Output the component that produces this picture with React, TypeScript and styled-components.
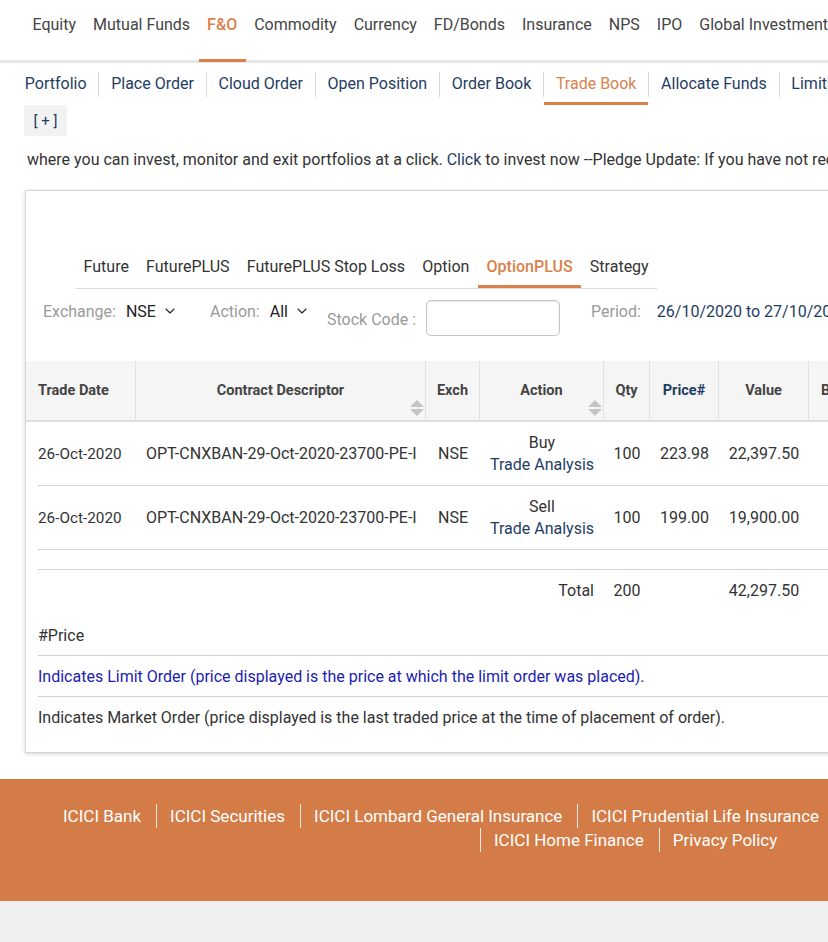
import React from 'react';
import styled, { createGlobalStyle } from 'styled-components';
import { ChevronDown } from 'lucide-react';

const GlobalStyle = createGlobalStyle`
  html, body {
    margin: 0;
    padding: 0;
    background: #f0f0f0;
    overflow: hidden;
  }
  body {
    font-family: Roboto, 'Noto Sans', Arial, sans-serif;
    color: #333;
  }
`;

const ORANGE = '#d9814c';
const NAVY = '#1f3d63';

const Page = styled.div`
  width: 1180px;
  background: #ffffff;
`;

const TopNav = styled.nav`
  display: flex;
  height: 60px;
  padding-left: 24px;
  border-bottom: 3px solid #e6e6e6;
`;

const TopItem = styled.a<{ $active?: boolean }>`
  display: flex;
  align-items: center;
  padding: 0 8.5px 10px;
  font-size: 16px;
  color: ${(p) => (p.$active ? ORANGE : '#444')};
  font-weight: ${(p) => (p.$active ? 500 : 400)};
  border-bottom: 3px solid ${(p) => (p.$active ? ORANGE : 'transparent')};
  margin-bottom: -2px;
  white-space: nowrap;
`;

const SubNav = styled.div`
  display: flex;
  align-items: center;
  padding-left: 13px;
  margin-top: 1px;
`;

const SubItem = styled.a<{ $active?: boolean }>`
  display: flex;
  align-items: center;
  height: 38px;
  padding: 0 11.8px;
  font-size: 16px;
  color: ${(p) => (p.$active ? ORANGE : NAVY)};
  border-bottom: 3px solid ${(p) => (p.$active ? ORANGE : 'transparent')};
  white-space: nowrap;
`;

const SubSep = styled.span`
  width: 1px;
  height: 25px;
  background: #d8d8d8;
`;

const ExpandBox = styled.div`
  width: 43px;
  height: 31px;
  margin-left: 24px;
  background: #f2f2f2;
  color: ${NAVY};
  font-size: 15px;
  display: flex;
  align-items: center;
  justify-content: center;
  white-space: pre;
`;

const Ticker = styled.div`
  margin: 14px 0 0 27px;
  line-height: 20px;
  font-size: 16px;
  color: #333;
  white-space: nowrap;
`;

const TickerLink = styled.span`
  color: ${NAVY};
`;

const Card = styled.section`
  margin: 20px 0 0 25px;
  border: 1px solid #d6d6d6;
  box-shadow: 0 1px 4px rgba(0, 0, 0, 0.18);
  background: #fff;
  padding-bottom: 15px;
`;

const TabList = styled.div`
  display: inline-flex;
  margin: 56px 0 0 49px;
  border-bottom: 1px solid #dcdcdc;
`;

const Tab = styled.a<{ $active?: boolean }>`
  display: flex;
  align-items: center;
  height: 38px;
  padding: 0 8.6px;
  font-size: 16px;
  color: ${(p) => (p.$active ? ORANGE : '#333')};
  font-weight: ${(p) => (p.$active ? 500 : 400)};
  border-bottom: 3px solid ${(p) => (p.$active ? ORANGE : 'transparent')};
  white-space: nowrap;
`;

const FilterRow = styled.div`
  display: flex;
  align-items: flex-start;
  padding: 11px 0 0 17px;
  height: 36px;
`;

const FilterGroup = styled.div<{ $gap: number; $center?: boolean }>`
  display: flex;
  align-items: center;
  height: ${(p) => (p.$center ? '36px' : '22px')};
  margin-right: ${(p) => p.$gap}px;
  white-space: nowrap;
`;

const FilterLabel = styled.span<{ $offset?: number }>`
  font-size: 16px;
  color: #9a9a9a;
  margin-right: 10px;
  padding-top: ${(p) => p.$offset ?? 0}px;
`;

const FilterValue = styled.span<{ $navy?: boolean }>`
  font-size: 16px;
  color: ${(p) => (p.$navy ? NAVY : '#222')};
  margin-left: ${(p) => (p.$navy ? '6px' : '0')};
  display: flex;
  align-items: center;
  gap: 6px;
`;

const StockInput = styled.input`
  width: 134px;
  height: 36px;
  box-sizing: border-box;
  border: 1px solid #c4c4c4;
  border-radius: 5px;
  box-shadow: inset 0 1px 2px rgba(0, 0, 0, 0.08);
`;

const COLS = '110px 290px 54px 124px 46px 69px 90px 92px 110px 110px';

const Table = styled.div`
  margin-top: 25px;
`;

const HeaderRow = styled.div`
  display: grid;
  grid-template-columns: ${COLS};
  height: 59px;
  background: #f5f5f5;
  border-bottom: 2px solid #dedede;
`;

const HeadCell = styled.div<{ $left?: boolean; $navy?: boolean }>`
  position: relative;
  display: flex;
  align-items: center;
  justify-content: ${(p) => (p.$left ? 'flex-start' : 'center')};
  padding-left: ${(p) => (p.$left ? '12px' : '0')};
  border-right: 1px solid #e0e0e0;
  font-size: 14.5px;
  font-weight: 700;
  color: ${(p) => (p.$navy ? NAVY : '#444')};
  white-space: nowrap;
`;

const SortMark = styled.svg`
  position: absolute;
  right: 0;
  bottom: 2px;
`;

const BodyRow = styled.div`
  display: grid;
  grid-template-columns: 98px 290px 54px 124px 46px 69px 90px 92px 110px 110px;
  height: 64px;
  margin-left: 12px;
  padding-top: 1px;
  box-sizing: border-box;
  border-bottom: 1px solid #d2d2d2;
`;

const Cell = styled.div<{ $align?: 'left' | 'center' | 'right' }>`
  display: flex;
  flex-direction: column;
  justify-content: center;
  align-items: ${(p) =>
    p.$align === 'left' ? 'flex-start' : p.$align === 'right' ? 'flex-end' : 'center'};
  padding: ${(p) => (p.$align === 'left' ? '0 0 0 10px' : p.$align === 'right' ? '0 10px 0 0' : '0')};
  font-size: 16px;
  color: #333;
  white-space: nowrap;
  line-height: 22px;
`;

const FirstCell = styled(Cell)`
  padding-left: 0;
  font-size: 15.3px;
`;

const ActionLink = styled.span`
  color: ${NAVY};
`;

const Spacer = styled.div`
  height: 19px;
  margin-left: 12px;
  border-bottom: 1px solid #d2d2d2;
`;

const TotalRow = styled.div`
  display: grid;
  grid-template-columns: ${COLS};
  height: 41px;
`;

const Notes = styled.div`
  margin: 4px 0 0 12px;
`;

const Note = styled.div<{ $blue?: boolean; $line?: boolean }>`
  height: 40px;
  display: flex;
  align-items: center;
  font-size: 16px;
  color: ${(p) => (p.$blue ? '#1d1db0' : '#333')};
  border-bottom: ${(p) => (p.$line ? '1px solid #d2d2d2' : 'none')};
  white-space: nowrap;
`;

const Footer = styled.footer`
  margin-top: 26px;
  background: #d37c47;
  height: 122px;
  padding-top: 25px;
  box-sizing: border-box;
`;

const FooterRow = styled.div<{ $indent: number }>`
  display: flex;
  padding-left: ${(p) => p.$indent}px;
`;

const FooterLink = styled.a<{ $first?: boolean }>`
  color: #fff;
  font-size: 17px;
  line-height: 24px;
  padding: 0 15px 0 13px;
  border-left: 1px solid ${(p) => (p.$first ? 'transparent' : 'rgba(255,255,255,0.85)')};
  white-space: nowrap;
`;

const Sort = () => (
  <SortMark width="16" height="20" viewBox="0 0 16 20">
    <path d="M8 2 L15 9 L1 9 Z" fill="#c4c4c4" />
    <path d="M1 11 L15 11 L8 18 Z" fill="#c4c4c4" />
  </SortMark>
);

const topItems = ['Equity', 'Mutual Funds', 'F&O', 'Commodity', 'Currency', 'FD/Bonds', 'Insurance', 'NPS', 'IPO', 'Global Investment'];
const subItems = ['Portfolio', 'Place Order', 'Cloud Order', 'Open Position', 'Order Book', 'Trade Book', 'Allocate Funds', 'Limits'];
const tabs = ['Future', 'FuturePLUS', 'FuturePLUS Stop Loss', 'Option', 'OptionPLUS', 'Strategy'];

const trades = [
  { date: '26-Oct-2020', contract: 'OPT-CNXBAN-29-Oct-2020-23700-PE-I', exch: 'NSE', action: 'Buy', qty: '100', price: '223.98', value: '22,397.50' },
  { date: '26-Oct-2020', contract: 'OPT-CNXBAN-29-Oct-2020-23700-PE-I', exch: 'NSE', action: 'Sell', qty: '100', price: '199.00', value: '19,900.00' },
];

export default function App() {
  return (
    <>
      <GlobalStyle />
      <Page>
        <TopNav>
          {topItems.map((t) => (
            <TopItem key={t} $active={t === 'F&O'}>{t}</TopItem>
          ))}
        </TopNav>

        <SubNav>
          {subItems.map((s, i) => (
            <React.Fragment key={s}>
              {i > 0 && <SubSep />}
              <SubItem $active={s === 'Trade Book'}>{s}</SubItem>
            </React.Fragment>
          ))}
        </SubNav>

        <ExpandBox>[ + ]</ExpandBox>

        <Ticker>
          where you can invest, monitor and exit portfolios at a click. <TickerLink>Click</TickerLink> to invest now --Pledge Update: If you have not received your pledge confirmation
        </Ticker>

        <Card>
          <TabList>
            {tabs.map((t) => (
              <Tab key={t} $active={t === 'OptionPLUS'}>{t}</Tab>
            ))}
          </TabList>

          <FilterRow>
            <FilterGroup $gap={32}>
              <FilterLabel>Exchange:</FilterLabel>
              <FilterValue>NSE <ChevronDown size={16} strokeWidth={1.6} /></FilterValue>
            </FilterGroup>
            <FilterGroup $gap={17}>
              <FilterLabel>Action:</FilterLabel>
              <FilterValue>All <ChevronDown size={16} strokeWidth={1.6} /></FilterValue>
            </FilterGroup>
            <FilterGroup $gap={31} $center>
              <FilterLabel $offset={2}>Stock Code :</FilterLabel>
              <StockInput />
            </FilterGroup>
            <FilterGroup $gap={0}>
              <FilterLabel>Period:</FilterLabel>
              <FilterValue $navy>26/10/2020 to 27/10/2020</FilterValue>
            </FilterGroup>
          </FilterRow>

          <Table>
            <HeaderRow>
              <HeadCell $left>Trade Date</HeadCell>
              <HeadCell>Contract Descriptor<Sort /></HeadCell>
              <HeadCell>Exch</HeadCell>
              <HeadCell>Action<Sort /></HeadCell>
              <HeadCell>Qty</HeadCell>
              <HeadCell $navy>Price#</HeadCell>
              <HeadCell>Value</HeadCell>
              <HeadCell>Brokerage</HeadCell>
              <HeadCell>Service Tax</HeadCell>
              <HeadCell>Stamp Duty</HeadCell>
            </HeaderRow>

            {trades.map((t, i) => (
              <BodyRow key={i}>
                <FirstCell $align="left">{t.date}</FirstCell>
                <Cell $align="left">{t.contract}</Cell>
                <Cell>{t.exch}</Cell>
                <Cell>
                  <span>{t.action}</span>
                  <ActionLink>Trade Analysis</ActionLink>
                </Cell>
                <Cell>{t.qty}</Cell>
                <Cell>{t.price}</Cell>
                <Cell>{t.value}</Cell>
                <Cell />
                <Cell />
                <Cell />
              </BodyRow>
            ))}

            <Spacer />

            <TotalRow>
              <Cell />
              <Cell />
              <Cell />
              <Cell $align="right">Total</Cell>
              <Cell>200</Cell>
              <Cell />
              <Cell>42,297.50</Cell>
            </TotalRow>
          </Table>

          <Notes>
            <Note $line>#Price</Note>
            <Note $blue $line>Indicates Limit Order (price displayed is the price at which the limit order was placed).</Note>
            <Note>Indicates Market Order (price displayed is the last traded price at the time of placement of order).</Note>
          </Notes>
        </Card>

        <Footer>
          <FooterRow $indent={49}>
            <FooterLink $first>ICICI Bank</FooterLink>
            <FooterLink>ICICI Securities</FooterLink>
            <FooterLink>ICICI Lombard General Insurance</FooterLink>
            <FooterLink>ICICI Prudential Life Insurance</FooterLink>
          </FooterRow>
          <FooterRow $indent={480}>
            <FooterLink>ICICI Home Finance</FooterLink>
            <FooterLink>Privacy Policy</FooterLink>
          </FooterRow>
        </Footer>
      </Page>
    </>
  );
}
